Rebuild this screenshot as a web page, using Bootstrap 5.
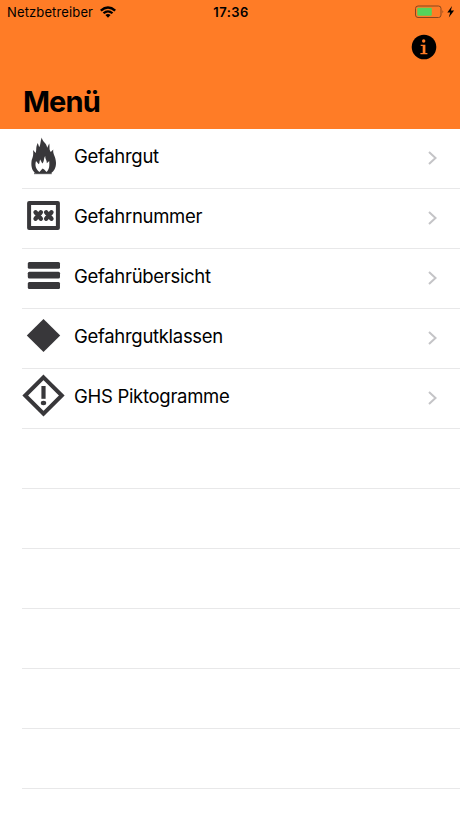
<!DOCTYPE html>
<html lang="de">
<head>
<meta charset="utf-8">
<meta name="viewport" content="width=device-width, initial-scale=1">
<title>Menü</title>
<link href="https://cdn.jsdelivr.net/npm/bootstrap@5.3.0/dist/css/bootstrap.min.css" rel="stylesheet">
<style>
body{font-family:Inter,"Liberation Sans",sans-serif;color:#000;background:#fff;height:818px}
.app-head{background:#ff7c26;height:129px}
.status{height:24px;font-size:13px;line-height:24px;padding:0 5px 0 7px}
.carrier{letter-spacing:.13px}
.wifi{margin-left:7px}
.clock{font-weight:600;letter-spacing:.4px}
.info-row{height:46px;padding-right:23px}
.title{font-size:29px;font-weight:700;line-height:36px;padding-left:23px;margin-top:14px;letter-spacing:-.9px}
.menu-row{height:60px;margin-left:22px;padding:0 22px 0 0;border:0;border-bottom:1px solid #e8e8e9;color:#000;background:#fff}
.menu-row:hover{color:#000}
.pic{width:44px;height:59px;margin-left:-1px;color:#38373a}
.label{font-size:18.5px;line-height:24px;letter-spacing:-.3px;margin-left:9px;margin-bottom:6px}
.chev{margin-bottom:1px}
</style>
</head>
<body>
<header class="app-head">
  <div class="status row g-0">
    <div class="col d-flex align-items-center">
      <span class="carrier">Netzbetreiber</span>
      <svg class="wifi" width="16" height="12" viewBox="0 0 16 12"><path d="M0 3.7Q8-3.2 16 3.7L14.4 5.4Q8 0 1.6 5.4ZM2.7 6.5Q8 2 13.3 6.5L11.7 8.1Q8 5.1 4.3 8.1ZM5.4 9.1Q8 7 10.6 9.1L8 11.8Z"/></svg>
    </div>
    <div class="col-auto clock">17:36</div>
    <div class="col d-flex align-items-center justify-content-end">
      <svg width="40" height="14" viewBox="0 0 40 14"><rect x=".5" y="1" width="25.5" height="11.5" rx="2.5" fill="none" stroke="#87471f"/><path d="M27.5 5q1.6 1.8 0 3.6z" fill="#87471f"/><rect x="2.3" y="2.7" width="14.5" height="8.1" rx="1" fill="#55d45b"/><path d="M37 1 32.3 7.6h2.9l-1.4 5 5.3-7h-3.2z"/></svg>
    </div>
  </div>
  <div class="info-row d-flex align-items-center justify-content-end">
    <svg width="26" height="26" viewBox="0 0 26 26"><circle cx="13" cy="13" r="12.3"/><circle cx="12.7" cy="7" r="1.7" fill="#ff7c26"/><path d="M9.7 10.7h4.7v8.2h2v1.4H9.4v-1.4h2.3v-6.8h-2z" fill="#ff7c26"/></svg>
  </div>
  <h1 class="title mb-0">Menü</h1>
</header>
<main class="list-group list-group-flush">
  <a class="list-group-item menu-row d-flex align-items-center text-decoration-none">
    <svg class="pic" viewBox="21 0 44 59" fill="currentColor"><path d="M41.8 8.5C42.3 13 46.8 14 47.2 18.8L49.2 14.5C50 18 48.8 20.5 50.8 23L53.3 20.5C52.4 25 56 27.5 56 34C56 38.4 54.5 42 50.5 44.5H36C32 42 31 37.5 31.5 32.5C31.8 29.3 34 27.5 33 21L35.7 24C36.8 21.6 35.5 18 37.8 14L39.2 18.2C40.8 15.5 40.3 11.8 41.8 8.5Z"/><path fill="#fff" d="M39.5 43C36 40.5 34.6 36.5 36 32L38.8 35.2C40 34 39 32.5 40.2 30.5L42.3 34.6C44.6 32 43.3 30 45.2 27C45.2 30.5 47 31 46.8 34.2L49.2 32C49.6 36.5 49.5 40.5 46.5 43L44.5 40.8 42.7 39.4 41.2 40.9Z"/><path d="M34 43.6h17.8v1.6H34z" opacity=".7"/></svg>
    <span class="label flex-grow-1">Gefahrgut</span>
    <svg class="chev" width="11" height="16" viewBox="0 0 11 16" fill="none" stroke="#c4c4c7" stroke-width="2"><path d="m2 2 6.5 6L2 14"/></svg>
  </a>
  <a class="list-group-item menu-row d-flex align-items-center text-decoration-none">
    <svg class="pic" viewBox="21 0 44 59" fill="none" stroke="currentColor"><rect x="29.1" y="14.1" width="28.8" height="24.8" stroke-width="4" stroke-linejoin="round"/><path d="m35.6 23.3 5.2 6.4m0-6.4-5.2 6.4m10.6-6.4 5.2 6.4m0-6.4-5.2 6.4" stroke-width="4.5" stroke-linecap="round"/></svg>
    <span class="label flex-grow-1">Gefahrnummer</span>
    <svg class="chev" width="11" height="16" viewBox="0 0 11 16" fill="none" stroke="#c4c4c7" stroke-width="2"><path d="m2 2 6.5 6L2 14"/></svg>
  </a>
  <a class="list-group-item menu-row d-flex align-items-center text-decoration-none">
    <svg class="pic" viewBox="21 0 44 59" fill="currentColor"><rect x="27.8" y="13" width="32.2" height="6.8" rx="1.5"/><rect x="27.8" y="22.8" width="32.2" height="6.8" rx="1.5"/><rect x="27.8" y="33.1" width="32.2" height="6.8" rx="1.5"/></svg>
    <span class="label flex-grow-1">Gefahrübersicht</span>
    <svg class="chev" width="11" height="16" viewBox="0 0 11 16" fill="none" stroke="#c4c4c7" stroke-width="2"><path d="m2 2 6.5 6L2 14"/></svg>
  </a>
  <a class="list-group-item menu-row d-flex align-items-center text-decoration-none">
    <svg class="pic" viewBox="21 0 44 59" fill="currentColor"><path d="M43.5 10 60.2 26.5 43.5 43 26.8 26.5z"/></svg>
    <span class="label flex-grow-1">Gefahrgutklassen</span>
    <svg class="chev" width="11" height="16" viewBox="0 0 11 16" fill="none" stroke="#c4c4c7" stroke-width="2"><path d="m2 2 6.5 6L2 14"/></svg>
  </a>
  <a class="list-group-item menu-row d-flex align-items-center text-decoration-none">
    <svg class="pic" viewBox="21 0 44 59" fill="currentColor"><path d="M43.5 8.3 61.8 26.5 43.5 44.7 25.2 26.5z" fill="none" stroke="currentColor" stroke-width="4"/><path d="M41.4 17h4.2v12.8h-4.2z"/><ellipse cx="43.5" cy="34" rx="2.7" ry="2.2"/></svg>
    <span class="label flex-grow-1">GHS Piktogramme</span>
    <svg class="chev" width="11" height="16" viewBox="0 0 11 16" fill="none" stroke="#c4c4c7" stroke-width="2"><path d="m2 2 6.5 6L2 14"/></svg>
  </a>
  <div class="menu-row"></div>
  <div class="menu-row"></div>
  <div class="menu-row"></div>
  <div class="menu-row"></div>
  <div class="menu-row"></div>
  <div class="menu-row"></div>
</main>
<script src="https://cdn.jsdelivr.net/npm/bootstrap@5.3.0/dist/js/bootstrap.bundle.min.js"></script>
</body>
</html>
